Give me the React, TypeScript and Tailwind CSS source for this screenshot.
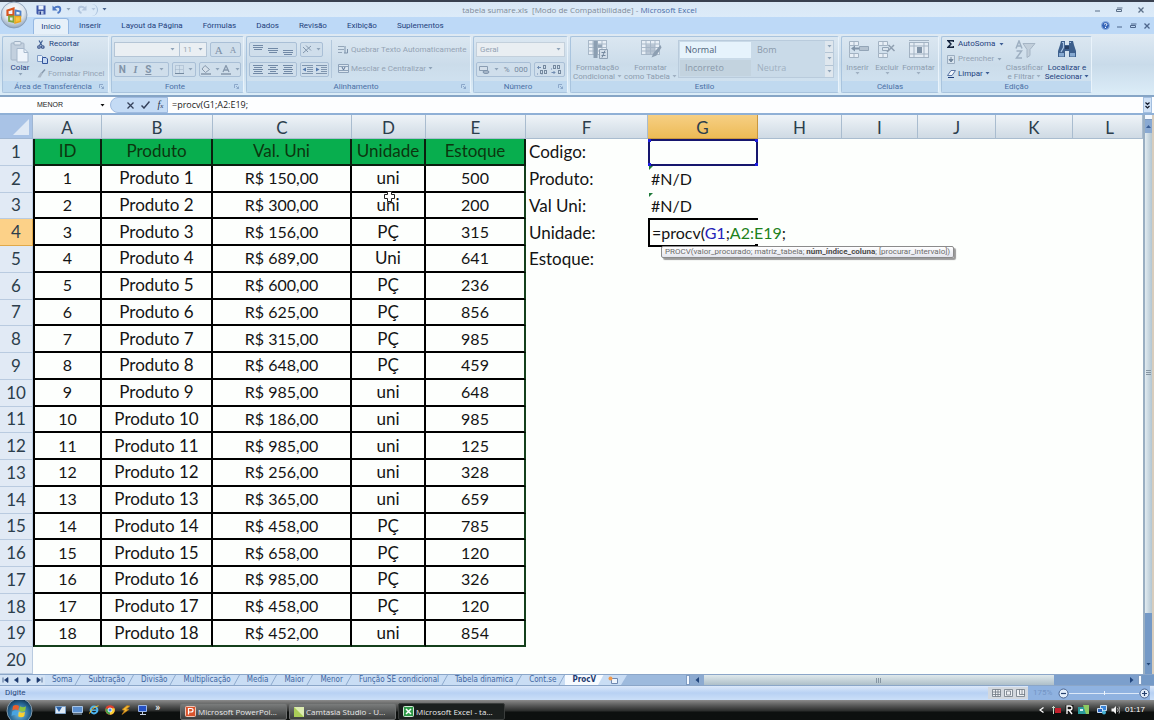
import React from 'react';

type Kids = { children?: React.ReactNode };

const columns = [
  { id: 'A', w: 'w-[69px]' },
  { id: 'B', w: 'w-[111px]' },
  { id: 'C', w: 'w-[139px]' },
  { id: 'D', w: 'w-[74px]' },
  { id: 'E', w: 'w-[100px]' },
  { id: 'F', w: 'w-[122px]' },
  { id: 'G', w: 'w-[110px]' },
  { id: 'H', w: 'w-[84px]' },
  { id: 'I', w: 'w-[76px]' },
  { id: 'J', w: 'w-[78px]' },
  { id: 'K', w: 'w-[77px]' },
  { id: 'L', w: 'w-auto' },
];

const products = [
  ['1', 'Produto 1', 'R$ 150,00', 'uni', '500'],
  ['2', 'Produto 2', 'R$ 300,00', 'uni', '200'],
  ['3', 'Produto 3', 'R$ 156,00', 'PÇ', '315'],
  ['4', 'Produto 4', 'R$ 689,00', 'Uni', '641'],
  ['5', 'Produto 5', 'R$ 600,00', 'PÇ', '236'],
  ['6', 'Produto 6', 'R$ 625,00', 'PÇ', '856'],
  ['7', 'Produto 7', 'R$ 315,00', 'PÇ', '985'],
  ['8', 'Produto 8', 'R$ 648,00', 'PÇ', '459'],
  ['9', 'Produto 9', 'R$ 985,00', 'uni', '648'],
  ['10', 'Produto 10', 'R$ 186,00', 'uni', '985'],
  ['11', 'Produto 11', 'R$ 985,00', 'uni', '125'],
  ['12', 'Produto 12', 'R$ 256,00', 'uni', '328'],
  ['13', 'Produto 13', 'R$ 365,00', 'uni', '659'],
  ['14', 'Produto 14', 'R$ 458,00', 'PÇ', '785'],
  ['15', 'Produto 15', 'R$ 658,00', 'PÇ', '120'],
  ['16', 'Produto 16', 'R$ 985,00', 'PÇ', '326'],
  ['17', 'Produto 17', 'R$ 458,00', 'PÇ', '120'],
  ['18', 'Produto 18', 'R$ 452,00', 'uni', '854'],
];

const labels = ['Codigo:', 'Produto:', 'Val Uni:', 'Unidade:', 'Estoque:'];
const rowNumbers = Array.from({ length: 20 }, (_, i) => i + 1);
const ribbonTabs = ['Início', 'Inserir', 'Layout da Página', 'Fórmulas', 'Dados', 'Revisão', 'Exibição', 'Suplementos'];
const sheetTabs = ['Soma', 'Subtração', 'Divisão', 'Multiplicação', 'Media', 'Maior', 'Menor', 'Função SE condicional', 'Tabela dinamica', 'Cont.se'];

/* ---------- small drawings ---------- */

function Caret({ className = 'text-[#8fa3b8]' }: { className?: string }) {
  return (
    <svg width="5" height="3" viewBox="0 0 5 3" className={`shrink-0 ${className}`} aria-hidden="true">
      <path d="M0.5 0h4L2.5 2.5z" fill="currentColor" />
    </svg>
  );
}

function OfficeOrb() {
  return (
    <svg width="28" height="28" viewBox="0 0 28 28" aria-hidden="true">
      <defs>
        <radialGradient id="orb" cx="50%" cy="35%" r="65%">
          <stop offset="0" stopColor="#ffffff" />
          <stop offset="0.6" stopColor="#dde5ee" />
          <stop offset="1" stopColor="#8fa3bb" />
        </radialGradient>
      </defs>
      <circle cx="14" cy="14" r="13" fill="url(#orb)" stroke="#8297b1" strokeWidth="0.8" />
      <path d="M7.500 9.500l6-2v6.500h-6z" fill="none" stroke="#d9541e" strokeWidth="2.200" />
      <path d="M15.500 9.500l5 1v4h-5z" fill="none" stroke="#4f7fc4" strokeWidth="1.800" />
      <path d="M9 15.500h4.500v5.500l-4.500-1z" fill="none" stroke="#7ea63a" strokeWidth="1.800" />
      <path d="M15 15.500h5.500v5l-5.500 1.500z" fill="#f7c33c" stroke="#eaa51e" strokeWidth="1.400" />
    </svg>
  );
}

function SaveIcon() {
  return (
    <svg width="10" height="10" viewBox="0 0 10 10" aria-hidden="true">
      <path d="M0.500 0.500h9v9h-8l-1-1z" fill="#3d56a8" />
      <path d="M2.500 0.500h5v4h-5z" fill="#e9f1fb" />
      <path d="M2.500 6h5v3.500h-5z" fill="#b9c9e6" />
      <path d="M3.500 6.500h1.500v3h-1.500z" fill="#24397f" />
    </svg>
  );
}

function UndoIcon({ flip = false, color }: { flip?: boolean; color: string }) {
  return (
    <svg width="10" height="9" viewBox="0 0 10 9" aria-hidden="true">
      <g transform={flip ? 'translate(10 0) scale(-1 1)' : undefined}>
        <path d="M2 3.500C4 1 8.500 1 8.300 4.500C8.200 6 7 7.500 5.500 8" fill="none" stroke={color} strokeWidth="1.900" />
        <path d="M0.500 0.500v5h5z" fill={color} />
      </g>
    </svg>
  );
}

function PasteIcon() {
  return (
    <svg width="20" height="22" viewBox="0 0 20 22" aria-hidden="true">
      <rect x="1" y="2" width="13" height="17" rx="1" fill="#c3d0de" stroke="#a6b6c8" />
      <rect x="4" y="0.500" width="7" height="3.500" rx="1" fill="#dfe7f0" stroke="#9fb0c3" />
      <path d="M7 7.500h7l4 4v9.500H7z" fill="#eef4fb" stroke="#a6b8cc" />
      <path d="M14 7.500v4h4" fill="none" stroke="#a6b8cc" />
    </svg>
  );
}

function CutIcon() {
  return (
    <svg width="8" height="9" viewBox="0 0 8 9" className="shrink-0" aria-hidden="true">
      <path d="M2 0.500l3 5M5.500 0.500l-3 5" stroke="#3f5f94" strokeWidth="1.200" />
      <circle cx="2" cy="7" r="1.300" fill="none" stroke="#2b4682" strokeWidth="1.100" />
      <circle cx="5.800" cy="7" r="1.300" fill="none" stroke="#2b4682" strokeWidth="1.100" />
    </svg>
  );
}

function CopyIcon() {
  return (
    <svg width="11" height="9" viewBox="0 0 11 9" className="shrink-0" aria-hidden="true">
      <path d="M0.500 0.500h4l1.500 1.500v4.500h-5.500z" fill="#e6effa" stroke="#7f9bc4" />
      <path d="M5.500 2.500h3.500l1.500 1.500v4.500h-5z" fill="#c4d8f2" stroke="#31539b" />
    </svg>
  );
}

function BrushIcon() {
  return (
    <svg width="9" height="9" viewBox="0 0 9 9" className="shrink-0" aria-hidden="true">
      <path d="M8 0.500l-3.500 4" stroke="#8799ad" strokeWidth="1.500" />
      <path d="M3.500 3.500l2 1.500-2 3.500-3 0z" fill="#a9b7c6" />
    </svg>
  );
}

function Lines({ widths, top = 0 }: { widths: number[]; top?: number }) {
  return (
    <svg width="10" height="10" viewBox="0 0 10 10" aria-hidden="true">
      {widths.map((w, i) => (
        <rect key={i} x={(10 - w) / 2} y={top + i * 2} width={w} height="1" fill="#7189a6" />
      ))}
    </svg>
  );
}

function IndentIcon({ flip = false }: { flip?: boolean }) {
  return (
    <svg width="11" height="9" viewBox="0 0 11 9" aria-hidden="true">
      <path d="M0 0.500h11M5 2.500h6M5 4.500h6M5 6.500h6M0 8.500h11" stroke="#7f95ae" />
      <path d={flip ? 'M0 2.500l3.500 2-3.500 2z' : 'M4 2.500l-3.500 2 3.500 2z'} fill="#5479ad" />
    </svg>
  );
}

function GridIcon({ kind }: { kind: 'cond' | 'table' | 'insert' | 'delete' | 'format' }) {
  return (
    <svg width="22" height="20" viewBox="0 0 22 20" aria-hidden="true">
      {(kind === 'cond' || kind === 'table') && (
        <>
          <rect x="1.500" y="0.500" width="18" height="14" fill="#e8eff6" stroke="#a9b9c9" />
          <path d="M1.500 4h18M1.500 7.500h18M1.500 11h18M6 0.500v14M10.500 0.500v14M15 0.500v14" stroke="#a9b9c9" />
        </>
      )}
      {kind === 'cond' && (
        <>
          <path d="M6.500 1h4v17h-4z" fill="#8c9fb2" />
          <path d="M11 4.500h4v3h-4z" fill="#93a5b7" />
          <path d="M12.500 9.500h8v9h-8z" fill="#d3dee9" stroke="#8fa1b4" />
          <path d="M14.500 12.500h4M14.500 15.500h4M18 10.500l-3 7" stroke="#75899f" />
        </>
      )}
      {kind === 'table' && (
        <>
          <path d="M6 4.500h9v10H6z" fill="#a4b4c4" opacity="0.700" />
          <path d="M20.500 5l-7 8-2 4.500 5-2 5-8z" fill="#8d9fb2" />
        </>
      )}
      {(kind === 'insert' || kind === 'delete') && (
        <>
          <path d="M2.500 1.500h9v4h-9zM2.500 13.500h9v4h-9z" fill="#e8eff6" stroke="#a3b3c3" />
          <path d="M7 1.500v4M7 13.500v4M2.500 5.500v8" stroke="#a3b3c3" />
        </>
      )}
      {kind === 'insert' && (
        <>
          <path d="M12.500 6.500h9v4h-9z" fill="#b4c2d0" stroke="#93a5b7" />
          <path d="M4 8.500l4-3v2h4v2H8v2z" fill="#8194a8" />
        </>
      )}
      {kind === 'delete' && (
        <>
          <path d="M6.500 7.500h6v3h-6z" fill="#dbe5ee" stroke="#93a5b7" />
          <path d="M11 12l7-7M12.500 5l6 6" stroke="#8f9fb0" strokeWidth="1.500" />
        </>
      )}
      {kind === 'format' && (
        <>
          <rect x="1.500" y="2.500" width="19" height="15" fill="#e4ecf4" stroke="#a3b3c3" />
          <path d="M1.500 6h19M1.500 14h19M6 2.500v15M16 2.500v15M1 0.500h20" stroke="#a3b3c3" />
          <path d="M9 7h5v6H9z" fill="#8194a8" />
        </>
      )}
    </svg>
  );
}

function SortFilterIcon() {
  return (
    <svg width="22" height="20" viewBox="0 0 22 20" aria-hidden="true">
      <path d="M2 8.500l3-7.500 3 7.500M3 6h4M2.500 11h5L2.500 18h5.500" fill="none" stroke="#9dafc1" strokeWidth="1.500" />
      <path d="M9 3.500h12l-5 6v6l-3 2v-8z" fill="#c2cfdb" stroke="#a5b5c5" />
    </svg>
  );
}

function BinocularsIcon() {
  return (
    <svg width="20" height="19" viewBox="0 0 20 19" aria-hidden="true">
      <path d="M4 1h4v4h4V1h4l1 4 2 6v6h-7v-6H8v6H1v-6l2-6z" fill="#3d5f8c" />
      <path d="M5 2.500h1.500v5L4 12M14 2.500h-1.500" stroke="#a7c3e4" strokeWidth="1.200" fill="none" />
      <path d="M2 13h5v3.500H2zM13 13h5v3.500h-5z" fill="#86a9d0" />
      <path d="M8 6h4v3H8z" fill="#243d63" />
    </svg>
  );
}

function WindowsOrb() {
  return (
    <svg width="27" height="20" viewBox="0 0 27 20" aria-hidden="true">
      <defs>
        <radialGradient id="start" cx="50%" cy="60%" r="60%">
          <stop offset="0" stopColor="#7cc4e8" />
          <stop offset="0.700" stopColor="#22608e" />
          <stop offset="1" stopColor="#12304a" />
        </radialGradient>
      </defs>
      <circle cx="13.500" cy="11" r="12.500" fill="url(#start)" stroke="#9db4c4" strokeWidth="0.800" />
      <path d="M7 6q3-2 6 0l-0.700 4.500q-3-1.800-6 0z" fill="#e8602c" />
      <path d="M14 6.300q3 1.800 6 0l-0.800 4.500q-3 1.800-6 0z" fill="#8cc63e" />
      <path d="M6.200 11.500q3-2 6 0l-0.700 4.500q-3-1.800-6 0z" fill="#49a4e0" />
      <path d="M13 11.800q3 1.800 6 0l-0.800 4.500q-3 1.800-6 0z" fill="#fbd02f" />
    </svg>
  );
}

/* ---------- ribbon pieces ---------- */

function Group({ title, width, launcher = true, children }: Kids & { title: string; width: string; launcher?: boolean }) {
  return (
    <section aria-label={title} className={`${width} flex shrink-0 flex-col overflow-hidden rounded-[2px] border border-[#a9c4de] border-r-[#e9f3fb] bg-linear-to-b from-[#dbe7f1] via-[#cbdcea] to-[#d2e4f2]`}>
      <div className="flex min-h-0 flex-1">{children}</div>
      <div className="flex h-[11px] items-center bg-[#c0d9ef] px-1 text-[#4a6fa5]">
        <span className="flex-1 text-center">{title}</span>
        {launcher && (
          <svg width="5" height="5" viewBox="0 0 5 5" aria-hidden="true">
            <path d="M0.500 4V0.500H4M2 2l2.500 2.500M4.500 2.500v2h-2" stroke="#7f9cc0" fill="none" strokeWidth="0.800" />
          </svg>
        )}
      </div>
    </section>
  );
}

function Box({ children, className = '' }: Kids & { className?: string }) {
  return (
    <div className={`flex h-[15px] items-center justify-around rounded-[2px] border border-[#a9bfd6] bg-[#cfdeeb] ${className}`}>
      {children}
    </div>
  );
}

function Tool({ label, children, className = '' }: Kids & { label: string; className?: string }) {
  return (
    <button aria-label={label} className={`flex items-center justify-center gap-1 ${className}`}>
      {children}
    </button>
  );
}

function BigTool({ lines, icon, dark = false, width }: { lines: [string, string?]; icon: React.ReactNode; dark?: boolean; width: string }) {
  return (
    <button className={`${width} flex shrink-0 flex-col items-center pt-[3px] leading-[9px] ${dark ? 'text-[#1e3f7d]' : 'text-[#8c9cae]'}`}>
      <span className="flex h-[23px] items-start">{icon}</span>
      <span className="whitespace-nowrap">{lines[0]}</span>
      <span className="flex items-center gap-[2px] whitespace-nowrap">
        {lines[1]}
        <Caret className={dark ? 'text-[#3d5d94]' : 'text-[#9fb0c2]'} />
      </span>
    </button>
  );
}

function WindowControls({ color }: { color: string }) {
  return (
    <>
      <button aria-label="Minimizar" className="flex h-3 w-[10px] items-center justify-center">
        <svg width="5" height="5" viewBox="0 0 5 5"><path d="M0 4h5" stroke={color} /></svg>
      </button>
      <button aria-label="Restaurar" className="flex h-3 w-[10px] items-center justify-center">
        <svg width="7" height="5" viewBox="0 0 7 5"><path d="M1 1h5.500M0.500 2.500h5v2h-5z" stroke={color} fill="none" /></svg>
      </button>
      <button aria-label="Fechar" className="flex h-3 w-[10px] items-center justify-center">
        <svg width="6" height="6" viewBox="0 0 6 6"><path d="M0.500 0.500l5 5M5.500 0.500l-5 5" stroke={color} strokeWidth="1.300" /></svg>
      </button>
    </>
  );
}

function TitleBar() {
  return (
    <header className="border-t-2 border-[#39404f] bg-linear-to-b from-[#d9e7f5] to-[#dcebf9] pl-8">
      <div className="flex h-[15px] items-center pr-2">
        <div className="flex h-3 w-[66px] items-center gap-[6px] rounded-r-full border-r border-[#a8c0dc] pl-1">
          <button aria-label="Salvar"><SaveIcon /></button>
          <button aria-label="Desfazer" className="flex items-center gap-1"><UndoIcon color="#4d78c4" /><Caret /></button>
          <button aria-label="Refazer" className="flex items-center gap-1"><UndoIcon flip color="#b3c6dd" /><Caret className="text-[#b3c6dd]" /></button>
        </div>
        <button aria-label="Personalizar" className="ml-1"><Caret className="text-[#48648f]" /></button>
        <h1 className="flex-1 pr-10 text-center font-[Open_Sans,sans-serif] text-[#7f8b98]">
          tabela sumare.xls&nbsp; [Modo de Compatibilidade] - <span className="text-[#4a6ea8]">Microsoft Excel</span>
        </h1>
        <div className="flex gap-3"><WindowControls color="#5b6f88" /></div>
      </div>
    </header>
  );
}

function TabRow() {
  return (
    <nav className="flex h-[17px] items-end bg-[#bdd9f7] pl-[33px] pr-[2px] text-[#1d3f7c]">
      {ribbonTabs.map((t, i) => (
        <button
          key={t}
          className={i === 0 ? 'h-4 w-9 rounded-t-[3px] border border-b-0 border-[#95b8e2] bg-[#e6f0f9]' : 'h-4 px-[10px]'}
        >
          {t}
        </button>
      ))}
      <div className="flex flex-1 items-center justify-end gap-1 self-center">
        <button aria-label="Ajuda">
          <svg width="9" height="9" viewBox="0 0 9 9">
            <circle cx="4.500" cy="4.500" r="4" fill="#3565b8" stroke="#8fb0e0" />
            <path d="M3 3.300q1.500-1.800 3 0q0 1-1.500 1.700M4.500 6v1" stroke="#fff" fill="none" />
          </svg>
        </button>
        <WindowControls color="#4d668c" />
      </div>
    </nav>
  );
}

function Ribbon() {
  const boxIcon = 'text-[10px] font-bold text-[#8193a8]';
  return (
    <div className="flex h-[63px] gap-[2px] border-b-2 border-[#86a5c6] bg-linear-to-b from-[#dfeaf3] via-[#c9dbea] to-[#dcedf8] px-[2px] pb-[2px] pt-[2px]">
      <Group title="Área de Transferência" width="w-[107px]">
        <button className="flex w-[34px] flex-col items-center pt-1 text-[#1e3f7d]">
          <PasteIcon />
          <span>Colar</span>
          <Caret />
        </button>
        <div className="flex flex-1 flex-col text-[#1e3f7d]">
          <button className="flex h-[15px] items-center gap-1"><CutIcon />Recortar</button>
          <button className="flex h-[15px] items-center gap-[2px]"><CopyIcon />Copiar</button>
          <button className="flex h-[15px] items-center gap-[2px] whitespace-nowrap text-[#94a3b4]"><BrushIcon />Formatar Pincel</button>
        </div>
      </Group>

      <Group title="Fonte" width="w-[133px]">
        <div className="flex flex-1 flex-col gap-[5px] px-[2px] pt-[5px]">
          <div className="flex gap-[3px]">
            <div className="flex h-[15px] flex-1 border border-[#b4c5d6] bg-[#eaeff3] text-[#9aa7b4]">
              <button aria-label="Nome da fonte" className="flex flex-1 items-center justify-end pr-1"><Caret /></button>
              <button aria-label="Tamanho da fonte" className="flex w-[27px] items-center justify-between border-l border-[#b4c5d6] px-[3px]">11<Caret /></button>
            </div>
            <Box className="w-[31px]">
              <Tool label="Aumentar fonte" className="font-[Liberation_Serif,serif] text-[11px] text-[#7d90a6]">A</Tool>
              <Tool label="Diminuir fonte" className="font-[Liberation_Serif,serif] text-[9px] text-[#7d90a6]">A</Tool>
            </Box>
          </div>
          <div className="flex gap-[3px]">
            <Box className="w-[55px]">
              <button className={boxIcon}>N</button>
              <button className={`${boxIcon} font-[Liberation_Serif,serif] italic`}>I</button>
              <button className={`${boxIcon} underline`}>S</button>
              <Caret />
            </Box>
            <Box className="w-[24px]">
              <Tool label="Bordas">
                <svg width="9" height="9" viewBox="0 0 9 9"><path d="M0.500 0.500h8v8h-8zM4.500 0.500v8M0.500 4.500h8" stroke="#9cb0c5" fill="none" strokeDasharray="1 1" /><path d="M0 8.500h9" stroke="#74899f" /></svg>
                <Caret />
              </Tool>
            </Box>
            <Box className="flex-1">
              <Tool label="Cor de preenchimento">
                <svg width="10" height="10" viewBox="0 0 10 10"><path d="M4 0.500l4.500 4-4 3L1 4z" fill="#d6e0ea" stroke="#8698ac" /><path d="M0 8h10v2H0z" fill="#98a9bb" /></svg>
                <Caret />
              </Tool>
              <Tool label="Cor da fonte">
                <svg width="10" height="10" viewBox="0 0 10 10"><path d="M2 7l3-6.500L8 7M3.200 5h3.600" fill="none" stroke="#8698ac" strokeWidth="1.300" /><path d="M0 8h10v2H0z" fill="#98a9bb" /></svg>
                <Caret />
              </Tool>
            </Box>
          </div>
        </div>
      </Group>

      <Group title="Alinhamento" width="w-[225px]">
        <div className="flex w-[84px] flex-col gap-[5px] px-[2px] pt-[5px]">
          <div className="flex gap-[3px]">
            <Box className="w-[48px]">
              <Tool label="Alinhar em cima"><Lines widths={[10, 10, 8]} /></Tool>
              <Tool label="Alinhar no meio"><Lines widths={[10, 10, 8]} top={3} /></Tool>
              <Tool label="Alinhar embaixo"><Lines widths={[10, 10, 8]} top={5} /></Tool>
            </Box>
            <Box className="w-[23px]">
              <Tool label="Orientação">
                <svg width="10" height="9" viewBox="0 0 10 9"><path d="M1 2l5 5M4 0.500l5 5M1 8l8-7" stroke="#8296ac" fill="none" /></svg>
                <Caret />
              </Tool>
            </Box>
          </div>
          <div className="flex gap-[3px]">
            <Box className="w-[48px]">
              <Tool label="Esquerda"><Lines widths={[10, 8, 10, 8, 10]} /></Tool>
              <Tool label="Centro"><Lines widths={[10, 6, 10, 6, 10]} /></Tool>
              <Tool label="Direita"><Lines widths={[10, 8, 10, 8, 10]} /></Tool>
            </Box>
            <Box className="w-[29px]">
              <Tool label="Diminuir recuo"><IndentIcon /></Tool>
              <Tool label="Aumentar recuo"><IndentIcon flip /></Tool>
            </Box>
          </div>
        </div>
        <div className="my-[3px] flex flex-1 flex-col justify-around border-l border-[#b3c8dc] pl-[6px] text-[#94a3b4]">
          <button className="flex items-center gap-[2px] whitespace-nowrap">
            <svg width="11" height="10" viewBox="0 0 11 10" className="shrink-0"><path d="M0 1.500h6M0 4.500h6M0 7.500h4" stroke="#93a5b8" /><path d="M7 1v7M9.500 4v4H6" stroke="#7d92aa" fill="none" /></svg>
            Quebrar Texto Automaticamente
          </button>
          <button className="flex items-center gap-[2px] whitespace-nowrap">
            <svg width="11" height="9" viewBox="0 0 11 9" className="shrink-0"><path d="M0.500 0.500h10v8h-10zM0.500 2.500h10M0.500 6.500h10" stroke="#8fa3ba" fill="#dbe6f0" /><path d="M4 3l1.500 3L7 3" stroke="#5d7494" fill="none" /></svg>
            Mesclar e Centralizar <Caret />
          </button>
        </div>
      </Group>

      <Group title="Número" width="w-[95px]">
        <div className="flex flex-1 flex-col gap-[5px] px-[2px] pt-[5px] text-[#94a3b4]">
          <button className="flex h-[15px] items-center justify-between border border-[#c3d0dc] bg-[#e9eef2] px-[3px]">Geral<Caret /></button>
          <div className="flex gap-[3px]">
            <Box className="w-[55px]">
              <Tool label="Moeda">
                <svg width="11" height="9" viewBox="0 0 11 9"><path d="M0.500 1.500h8v4h-8z" fill="#d4dfea" stroke="#8a9db2" /><ellipse cx="7" cy="7" rx="3" ry="1.500" fill="#a9b9ca" stroke="#7d92aa" /></svg>
                <Caret />
              </Tool>
              <button className="text-[#75899f]">%</button>
              <button className="text-[#75899f]">000</button>
            </Box>
            <Box className="flex-1">
              <Tool label="Aumentar casas decimais">
                <svg width="11" height="10" viewBox="0 0 11 10"><path d="M4 2.500H0.500M2 1L0.500 2.500L2 4M5 8.500v1M0.500 8.500v1" stroke="#6f8bb0" fill="none" /><rect x="6.500" y="0.500" width="2" height="3" fill="none" stroke="#75899f" /><rect x="3.500" y="5.500" width="2" height="3" fill="none" stroke="#75899f" /><rect x="7.500" y="5.500" width="2" height="3" fill="none" stroke="#75899f" /></svg>
              </Tool>
              <Tool label="Diminuir casas decimais">
                <svg width="11" height="10" viewBox="0 0 11 10"><path d="M0.500 7.500H4M2.500 6L4 7.500L2.500 9M0.500 3.500v1" stroke="#6f8bb0" fill="none" /><rect x="2.500" y="0.500" width="2" height="3" fill="none" stroke="#75899f" /><rect x="6.500" y="0.500" width="2" height="3" fill="none" stroke="#75899f" /><rect x="7.500" y="5.500" width="2" height="3" fill="none" stroke="#75899f" /></svg>
              </Tool>
            </Box>
          </div>
        </div>
      </Group>

      <Group title="Estilo" width="w-[269px]" launcher={false}>
        <BigTool width="w-[53px]" lines={['Formatação', 'Condicional']} icon={<GridIcon kind="cond" />} />
        <BigTool width="w-[53px]" lines={['Formatar', 'como Tabela']} icon={<GridIcon kind="table" />} />
        <div className="my-[3px] ml-[1px] mr-1 flex flex-1 border border-[#b9cbdc] bg-[#c9dae8] font-[Open_Sans,sans-serif] text-[9px] text-[#8999aa]">
          <div className="grid flex-1 grid-cols-2 grid-rows-2">
            <button className="m-[1px] bg-[#e6f3fc] px-[5px] text-left text-[#4d6179]">Normal</button>
            <button className="px-[5px] text-left">Bom</button>
            <button className="m-[1px] bg-[#c3d3df] px-[5px] text-left">Incorreto</button>
            <button className="px-[5px] text-left text-[#9fb0c0]">Neutra</button>
          </div>
          <div className="flex w-2 flex-col divide-y divide-[#b3c4d4] bg-[#dfe7ee]">
            {['Acima', 'Abaixo', 'Mais'].map((n) => (
              <button key={n} aria-label={n} className="flex flex-1 items-center justify-center"><Caret /></button>
            ))}
          </div>
        </div>
      </Group>

      <Group title="Células" width="w-[98px]" launcher={false}>
        <BigTool width="w-[31px]" lines={['Inserir']} icon={<GridIcon kind="insert" />} />
        <BigTool width="w-[28px]" lines={['Excluir']} icon={<GridIcon kind="delete" />} />
        <BigTool width="w-[35px]" lines={['Formatar']} icon={<GridIcon kind="format" />} />
      </Group>

      <Group title="Edição" width="w-[151px]" launcher={false}>
        <div className="flex w-[61px] flex-col pl-[5px] text-[#1e3f7d]">
          <button className="flex h-[15px] items-center gap-1 whitespace-nowrap">
            <svg width="7" height="8" viewBox="0 0 7 8" className="shrink-0"><path d="M6.500 2V0.700H1L4 4 1 7.300h5.500V6" fill="none" stroke="#14233d" strokeWidth="1.400" /></svg>
            AutoSoma <Caret className="text-[#3d5d94]" />
          </button>
          <button className="flex h-[15px] items-center gap-[3px] whitespace-nowrap text-[#94a3b4]">
            <svg width="8" height="9" viewBox="0 0 8 9" className="shrink-0"><path d="M0.500 0.500h7v8h-7z" fill="#d8e3ed" stroke="#9badc0" /><path d="M4 2v3M2 4.500h4L4 7z" fill="#75899f" stroke="#75899f" /></svg>
            Preencher <Caret />
          </button>
          <button className="flex h-[15px] items-center gap-[2px] whitespace-nowrap">
            <svg width="9" height="8" viewBox="0 0 9 8" className="shrink-0"><path d="M4 0.500h4.500L5 5.500H0.500z" fill="#f3f8fd" stroke="#5c76a4" /><path d="M1 7.500h6" stroke="#1e3f7d" /></svg>
            Limpar <Caret className="text-[#3d5d94]" />
          </button>
        </div>
        <BigTool width="w-[43px]" lines={['Classificar', 'e Filtrar']} icon={<SortFilterIcon />} />
        <BigTool dark width="w-[42px]" lines={['Localizar e', 'Selecionar']} icon={<BinocularsIcon />} />
      </Group>
    </div>
  );
}

function FormulaBar() {
  return (
    <div className="flex h-4 items-stretch bg-[#fdfeff] font-[Open_Sans,sans-serif] text-[9px] text-[#1b1b1b]">
      <div className="flex w-[110px] items-center">
        <input aria-label="Caixa de nome" defaultValue="MENOR" className="min-w-0 flex-1 bg-transparent text-center font-[Liberation_Sans,sans-serif] text-[7px] outline-none" />
        <button aria-label="Nomes" className="pr-[5px]"><Caret className="text-[#111]" /></button>
      </div>
      <div className="flex w-[58px] items-center justify-around rounded-l-full border border-[#9fbbe0] bg-[#c4dbf5] pl-3">
        <button aria-label="Cancelar"><svg width="7" height="7" viewBox="0 0 7 7"><path d="M0.500 0.500l6 6M6.500 0.500l-6 6" stroke="#35415a" strokeWidth="1.300" /></svg></button>
        <button aria-label="Inserir"><svg width="9" height="8" viewBox="0 0 9 8"><path d="M0.500 4.500l2.500 2.500L8.500 0.500" fill="none" stroke="#35415a" strokeWidth="1.500" /></svg></button>
        <button aria-label="Inserir função" className="font-[Liberation_Serif,serif] text-[10px] italic leading-3 text-[#26334d]">f<span className="text-[7px]">x</span></button>
      </div>
      <input aria-label="Barra de fórmulas" defaultValue="=procv(G1;A2:E19;" className="min-w-0 flex-1 bg-transparent pl-1 outline-none" />
      <button aria-label="Expandir" className="mr-[2px] flex w-[9px] items-center justify-center border border-[#a3bfe0] bg-[#cfe1f6]">
        <svg width="5" height="7" viewBox="0 0 5 7"><path d="M0.500 0.500l2 2 2-2M0.500 4l2 2 2-2" fill="none" stroke="#10182a" strokeWidth="1.200" /></svg>
      </button>
    </div>
  );
}

/* ---------- sheet ---------- */

function ActiveCell() {
  return (
    <div className="absolute -inset-y-px inset-x-0 flex items-center border-2 border-r-0 border-black pl-[2px]">
      <span className="whitespace-nowrap text-[16px]">
        =procv(<span className="text-[#2323b8]">G1</span>;<span className="text-[#1d821d]">A2:E19</span>;
      </span>
      <span className="absolute -bottom-[2px] right-0 h-[3px] w-[3px] bg-black" />
      <div role="tooltip" className="absolute left-[11px] top-[26px] z-10 flex h-[12px] items-center whitespace-nowrap rounded-[2px] border border-[#8b8b8b] bg-linear-to-b from-white to-[#e4e6ee] px-[3px] font-[Roboto,sans-serif] text-[8px] text-[#6b6b6b] shadow-[2px_2px_1px_#9a9a9a]">
        <span>PROCV(valor_procurado; matriz_tabela; <b className="text-[#4a4a4a]">núm_índice_coluna</b>; [procurar_intervalo])</span>
      </div>
    </div>
  );
}

function ErrorCell() {
  return (
    <div className="pl-[3px] text-[16px]">
      <svg width="4" height="4" viewBox="0 0 4 4" className="absolute left-px top-0" aria-hidden="true"><path d="M0 0h4L0 4z" fill="#1f7a3a" /></svg>
      #N/D
    </div>
  );
}

function InputCell() {
  return (
    <div className="absolute inset-0 border-2 border-[#16166e]">
      <span className="absolute -left-[2px] -top-[2px] h-[3px] w-[3px] bg-[#1c1ce0]" />
      <span className="absolute -right-[2px] -top-[2px] h-[3px] w-[3px] bg-[#1c1ce0]" />
      <span className="absolute -bottom-[2px] -left-[2px] h-[3px] w-[3px] bg-[#1c1ce0]" />
      <span className="absolute -bottom-[2px] -right-[2px] h-[3px] w-[3px] bg-[#1c1ce0]" />
    </div>
  );
}

function Sheet() {
  return (
    <main className="flex min-h-0 flex-1 border-t-2 border-[#8fb0d6] bg-[#fdfffd]">
      <div className="min-w-0 flex-1 overflow-hidden">
        <table className="h-full w-full table-fixed border-separate border-spacing-0 font-[Lato,sans-serif] text-[17px] leading-5 text-[#141414]">
          <colgroup>
            <col className="w-[33px]" />
            {columns.map((c) => <col key={c.id} className={c.w} />)}
          </colgroup>
          <thead>
            <tr className="h-6">
              <th className="border-b border-r border-[#9fb6d3] bg-[#a9c3e6] p-0">
                <svg width="16" height="16" viewBox="0 0 16 16" className="ml-auto mr-[3px]" aria-hidden="true"><path d="M16 0v16H0z" fill="#dfe9f5" /></svg>
              </th>
              {columns.map((c) => (
                <th
                  key={c.id}
                  scope="col"
                  className={`border-b border-r p-0 pt-[2px] font-normal text-[#2c3e4c] ${c.id === 'G' ? 'border-[#c9973f] bg-linear-to-b from-[#f6cf83] to-[#edbb55]' : 'border-[#a9bccf] bg-linear-to-b from-[#eff4f8] to-[#cfdae4]'} ${c.id === 'L' ? 'pl-1' : ''}`}
                >
                  {c.id}
                </th>
              ))}
            </tr>
          </thead>
          <tbody>
            {rowNumbers.map((n) => {
              const cells = n === 1 ? ['ID', 'Produto', 'Val. Uni', 'Unidade', 'Estoque'] : products[n - 2];
              return (
                <tr key={n} className="h-[26px]">
                  <th scope="row" className={`border-b border-r p-0 font-normal text-[#2c3e4c] ${n === 4 ? 'border-[#e0a94a] bg-[#fcd188]' : 'border-[#b9cbe0] bg-[#e1eaf5]'}`}>{n}</th>
                  {cells
                    ? cells.map((v, i) => (
                        <td
                          key={i}
                          className={`border-b-2 border-r-2 p-0 text-center ${i === 0 ? 'border-l-2' : ''} ${n > 1 && i !== 1 && i !== 3 ? 'text-[16px]' : ''} ${n === 1 ? 'border-[#0a1f0e] bg-[#08ae4e] text-[#0c360f]' : i === 4 ? 'border-black border-r-[#14401c]' : 'border-black'} ${n === 19 ? 'border-b-[#14401c]' : ''}`}
                        >
                          {n === 3 && i === 3 ? (
                            <span className="relative">
                              {v}
                              <svg width="11" height="11" viewBox="0 0 11 11" className="absolute left-2 -top-[3px]" aria-hidden="true">
                                <path d="M3.500 0.500h4v3h3v4h-3v3h-4v-3h-3v-4h3z" fill="#fff" stroke="#222" />
                              </svg>
                            </span>
                          ) : v}
                        </td>
                      ))
                    : <td colSpan={5} className="p-0" />}
                  <td className="p-0 pl-[3px]">{labels[n - 1]}</td>
                  <td className="relative p-0">
                    {n === 1 && <InputCell />}
                    {(n === 2 || n === 3) && <ErrorCell />}
                    {n === 4 && <ActiveCell />}
                  </td>
                  <td colSpan={5} className="p-0" />
                </tr>
              );
            })}
          </tbody>
        </table>
      </div>
      <div className="flex w-[11px] flex-col border-l-2 border-r-2 border-l-[#9aafc2] border-r-[#d8cdbd] bg-[#7499c6]">
        <div className="h-[5px] border-b border-[#7f9cc2] bg-[#f2f8ff]" />
        <button aria-label="Rolar para cima" className="flex h-[13px] items-center justify-center bg-[#89a9d2]">
          <svg width="5" height="3" viewBox="0 0 5 3"><path d="M0 3h5L2.500 0z" fill="#3a5e96" /></svg>
        </button>
        <div className="flex h-[480px] items-center justify-center bg-linear-to-r from-[#e1ebf0] to-[#b3c6d2]">
          <svg width="5" height="6" viewBox="0 0 5 6"><path d="M0 0.500h5M0 2.500h5M0 4.500h5" stroke="#8595a2" /></svg>
        </div>
        <div className="flex flex-1 items-end justify-center pb-2"><Caret className="text-[#234878]" /></div>
      </div>
    </main>
  );
}

/* ---------- bottom bars ---------- */

function SheetTabs() {
  const nav = ['M1 0.500v5M6 0.500v5L2.500 3z', 'M5 0.500v5L1.500 3z', 'M2 0.500v5L5.500 3z', 'M1 0.500v5L4.500 3zM6 0.500v5'];
  return (
    <div className="flex h-3 items-stretch border-y border-[#8ba6c8] bg-[#9dbadd] font-[DejaVu_Sans_Condensed,DejaVu_Sans,sans-serif] text-[8px] leading-3 text-[#3f66a0]">
      <div className="flex w-[45px] items-center justify-around bg-[#d3e3f5]">
        {nav.map((d, i) => (
          <button key={i} aria-label={['Primeira', 'Anterior', 'Próxima', 'Última'][i]}>
            <svg width="7" height="6" viewBox="0 0 7 6"><path d={d} fill="#1d3a6e" stroke="#1d3a6e" strokeWidth="0.700" /></svg>
          </button>
        ))}
      </div>
      {sheetTabs.map((t) => (
        <button key={t} className="flex items-center bg-[#c9ddf4] pl-[7px]">
          {t}
          <svg width="8" height="10" viewBox="0 0 8 10" className="ml-[1px]" aria-hidden="true"><path d="M2 10L7.500 0" stroke="#8fabce" fill="none" /></svg>
        </button>
      ))}
      <button className="flex items-center bg-[#f7fbff] pl-[7px] font-bold text-[#1d3a70]">
        ProcV
        <svg width="8" height="10" viewBox="0 0 8 10" aria-hidden="true"><path d="M2 10L7.500 0H8v10z" fill="#c9ddf4" /></svg>
      </button>
      <button aria-label="Nova planilha" className="flex items-center bg-[#c9ddf4] pl-1">
        <svg width="10" height="8" viewBox="0 0 10 8"><path d="M3.500 2.500h6v5h-6z" fill="#eef5fd" stroke="#7089b0" /><circle cx="2.500" cy="2.500" r="2" fill="#ee9a4d" /></svg>
        <svg width="8" height="10" viewBox="0 0 8 10" className="ml-[1px]" aria-hidden="true"><path d="M2 10L8 0v10z" fill="#9dbadd" /></svg>
      </button>
      <div className="flex-1" />
      <div className="flex w-[468px] items-stretch">
        <span className="w-1 border border-[#7f9cc2] bg-[#f2f8ff]" />
        <button aria-label="Rolar para a esquerda" className="flex w-[14px] items-center justify-center bg-[#8caad0]">
          <svg width="4" height="6" viewBox="0 0 4 6"><path d="M4 0v6L0.500 3z" fill="#21457c" /></svg>
        </button>
        <span className="flex w-[350px] items-center justify-center bg-linear-to-b from-[#dfe9ec] to-[#aebfc9]">
          <svg width="6" height="5" viewBox="0 0 6 5"><path d="M0.500 0v5M2.500 0v5M4.500 0v5" stroke="#8595a2" /></svg>
        </span>
        <button aria-label="Rolar para a direita" className="flex flex-1 items-center justify-end bg-[#7c9fcc] pr-[4px]">
          <svg width="4" height="6" viewBox="0 0 4 6"><path d="M0 0v6L3.500 3z" fill="#21457c" /></svg>
        </button>
        <span className="w-1 border border-[#7f9cc2] bg-[#f2f8ff]" />
        <span className="w-3 bg-[#7499c6]" />
      </div>
    </div>
  );
}

function ZoomKnob({ plus = false, label }: { plus?: boolean; label: string }) {
  return (
    <button aria-label={label}>
      <svg width="11" height="11" viewBox="0 0 11 11">
        <circle cx="5.500" cy="5.500" r="4.500" fill="#e3eefb" stroke="#49648f" />
        <path d={plus ? 'M3 5.500h5M5.500 3v5' : 'M3 5.500h5'} stroke="#26416f" strokeWidth="1.200" />
      </svg>
    </button>
  );
}

function StatusBar() {
  const views = ['M0.500 0.500h8v7h-8zM0.500 3h8M0.500 5.500h8M3.500 0.500v7M6 0.500v7', 'M0.500 0.500h8v7h-8zM2.500 2h4v4h-4z', 'M0.500 0.500h8v7h-8zM3.500 0.500v5M6 0.500v5M3.500 5.500H9'];
  return (
    <div className="flex h-[14px] items-center bg-linear-to-b from-[#dbe8fa] via-[#b8d1f3] to-[#cbdff8] pl-[5px] pr-1 text-[#27477c]">
      <span className="flex-1">Digite</span>
      <div className="flex items-center bg-[#d3d8de] px-[2px]">
        {views.map((d, i) => (
          <button key={i} aria-label={['Normal', 'Layout', 'Quebra'][i]} className="flex h-[12px] w-[12px] items-center justify-center">
            <svg width="9" height="8" viewBox="0 0 9 8"><path d={d} fill="#eef1f4" stroke="#6d7781" strokeWidth="0.800" /></svg>
          </button>
        ))}
      </div>
      <div className="flex w-[122px] items-center bg-[#8fb2e0] pl-[5px]">
        <span className="w-[25px] text-[#7394c4]">175%</span>
        <ZoomKnob label="Menos zoom" />
        <span className="flex h-[14px] flex-1 items-center justify-center">
          <span className="h-px flex-1 bg-[#dbe8f8]" />
          <span className="h-1 w-px bg-[#eef5fc]" />
          <span className="h-px flex-1 bg-[#dbe8f8]" />
        </span>
        <ZoomKnob plus label="Mais zoom" />
      </div>
    </div>
  );
}

function Task({ icon, label, active = false }: { icon: React.ReactNode; label: string; active?: boolean }) {
  return (
    <button className={`flex h-[17px] w-[107px] items-center gap-[2px] rounded-[2px] border px-1 font-[Open_Sans,sans-serif] text-[#e9e9e9] ${active ? 'border-[#3a3d3c] bg-[#1b1f1e]' : 'border-[#6c6e6e] bg-linear-to-b from-[#7b7d7d] to-[#3b3d3d]'}`}>
      {icon}
      <span className="truncate">{label}</span>
    </button>
  );
}

function Taskbar() {
  return (
    <footer className="flex h-5 items-center bg-linear-to-b from-[#8b8b8b] from-0% via-[#2a2c2b] via-55% to-[#0d100f] to-60% pr-[9px]">
      <button aria-label="Iniciar" className="ml-[6px] w-[27px]"><WindowsOrb /></button>
      <div className="ml-[22px] flex items-center gap-[6px]">
        <svg width="11" height="10" viewBox="0 0 11 10"><path d="M0.500 1.500h10v7h-10z" fill="#dfeaf5" stroke="#7fa3c9" /><path d="M1 2h6l-3 5z" fill="#2d63a8" /></svg>
        <svg width="11" height="10" viewBox="0 0 11 10"><path d="M0.500 1.500h10v6h-10z" fill="#5b8fd0" stroke="#a8c4e4" /><path d="M1 9h9" stroke="#9fb8d4" /></svg>
        <svg width="10" height="10" viewBox="0 0 10 10"><circle cx="5" cy="5" r="3.400" fill="none" stroke="#4db4ee" strokeWidth="2" /><path d="M2 5.200h6.500" stroke="#4db4ee" strokeWidth="1.400" /><path d="M0.500 8.500Q3 2 9.500 0.800" stroke="#f2c230" fill="none" /></svg>
        <svg width="10" height="10" viewBox="0 0 10 10"><circle cx="5" cy="5" r="4.800" fill="#e0402f" /><path d="M0.800 3.200A4.800 4.800 0 0 0 5 9.800L7 6z" fill="#48a74a" /><path d="M5 9.800A4.800 4.800 0 0 0 9.500 3.300H5z" fill="#f8cf35" /><circle cx="5" cy="5" r="2" fill="#4c8bf0" stroke="#fff" strokeWidth="0.800" /></svg>
        <svg width="10" height="10" viewBox="0 0 10 10"><path d="M6 0.500L1 4.500l2.500 1L1 9.500l7-5-2.500-0.500L9 1z" fill="#f4b62c" stroke="#b5761a" strokeWidth="0.700" /></svg>
        <svg width="11" height="10" viewBox="0 0 11 10"><path d="M1.500 0.500h8v6h-8z" fill="#2450c4" stroke="#9db9ea" /><path d="M3 9.500h6M5.500 7v2" stroke="#c4d0e4" /></svg>
      </div>
      <span className="ml-[7px] w-[25px] self-start text-[11px] leading-4 text-white">»</span>
      <div className="flex gap-[2px] self-end">
        <Task label="Microsoft PowerPoi..." icon={<svg width="11" height="11" viewBox="0 0 11 11" className="shrink-0"><rect x="0.500" y="0.500" width="10" height="10" rx="1" fill="#d9532c" stroke="#f0c4b4" /><path d="M3.500 8.500v-6h2.500a2 1.700 0 0 1 0 3.500H3.500" stroke="#fff" fill="none" strokeWidth="1.200" /></svg>} />
        <Task label="Camtasia Studio - U..." icon={<svg width="10" height="10" viewBox="0 0 10 10" className="shrink-0"><path d="M0 0h10v10H0z" fill="#a9cc58" /><path d="M0 0l10 10V0z" fill="#dcecb0" /></svg>} />
        <Task active label="Microsoft Excel - ta..." icon={<svg width="11" height="11" viewBox="0 0 11 11" className="shrink-0"><rect x="0.500" y="0.500" width="10" height="10" rx="1" fill="#2f9a48" stroke="#cfe8d4" /><path d="M3 3l5 5M8 3L3 8" stroke="#fff" strokeWidth="1.500" /></svg>} />
      </div>
      <div className="flex flex-1 items-center justify-end gap-1 text-white">
        <button aria-label="Mostrar ícones ocultos" className="pr-1"><svg width="5" height="6" viewBox="0 0 5 6"><path d="M4.500 0.500L1 3l3.500 2.500" stroke="#fff" fill="none" strokeWidth="1.300" /></svg></button>
        <svg width="9" height="10" viewBox="0 0 9 10"><path d="M1.500 1v8M0 2.500h3" stroke="#c9dcc9" /><rect x="3" y="3" width="6" height="5" fill="#c2202c" /></svg>
        <svg width="9" height="10" viewBox="0 0 9 10"><path d="M0.500 0h8v10h-8z" fill="#111" /><path d="M2 9V1h3a2 2 0 0 1 0 4H2M4 5l3 4" stroke="#fff" fill="none" strokeWidth="1.300" /></svg>
        <svg width="11" height="10" viewBox="0 0 11 10"><path d="M0 2h8v7H0z" fill="#2b9b9b" /><path d="M5 0h6v9H8z" fill="#8ecb62" /><path d="M2 4h3v2H2z" fill="#d9f2f2" /></svg>
        <svg width="10" height="10" viewBox="0 0 10 10" className="ml-1"><path d="M3.500 0.500h6v5h-6z" fill="#3b85d8" stroke="#cfe2f6" /><path d="M0.500 3.500h5v4h-5z" fill="#2a66bd" stroke="#cfe2f6" /><circle cx="7" cy="7.500" r="2" fill="#47b4d8" /></svg>
        <svg width="9" height="10" viewBox="0 0 9 10"><path d="M0.500 3.500h2L5 1v8L2.500 6.500h-2z" fill="#f2f2f2" /><path d="M6.500 3q1.500 2 0 4M8 1.500q2 3.500 0 7" stroke="#d5d5d5" fill="none" strokeWidth="0.800" /></svg>
        <time className="ml-px font-[Liberation_Sans,sans-serif] text-[8px]">01:17</time>
      </div>
    </footer>
  );
}

export default function App() {
  return (
    <div className="flex h-screen flex-col overflow-hidden font-[Roboto,sans-serif] text-[8px] leading-[10px]">
      <div className="relative">
        <TitleBar />
        <TabRow />
        <button aria-label="Botão do Office" className="absolute left-0 top-px h-[28px] w-[28px]"><OfficeOrb /></button>
      </div>
      <Ribbon />
      <FormulaBar />
      <Sheet />
      <SheetTabs />
      <StatusBar />
      <Taskbar />
    </div>
  );
}
